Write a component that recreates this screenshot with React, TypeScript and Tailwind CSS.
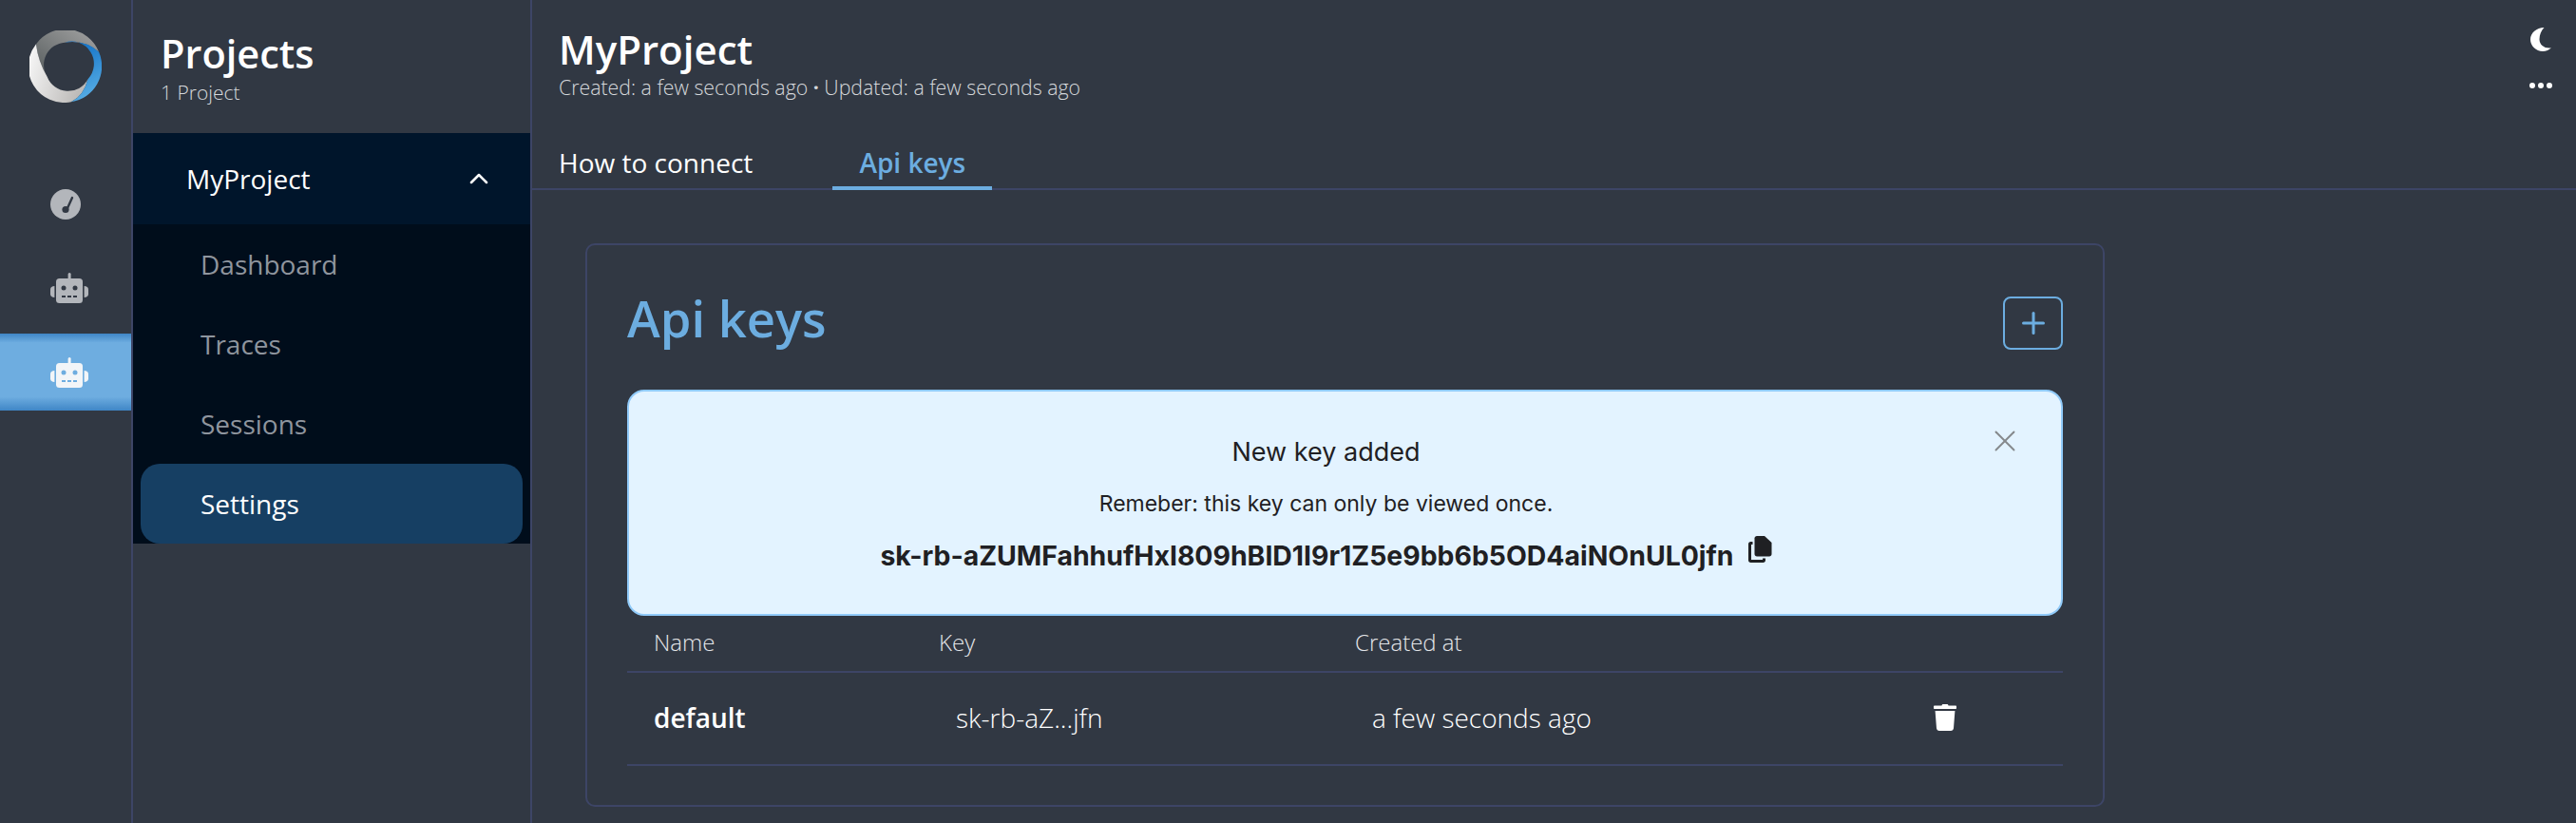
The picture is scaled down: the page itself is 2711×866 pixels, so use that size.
import { ChevronUp, Plus, X } from "lucide-react";

const open = "font-['Open_Sans',sans-serif]";
const inter = "font-['Inter',sans-serif]";

function Logo() {
  return (
    <svg viewBox="95 67 225 226" className="h-[76px] w-[76px]">
      <defs>
        <linearGradient id="gTop" x1="0" y1="1" x2="1" y2="0">
          <stop offset="0" stopColor="#555b5c" />
          <stop offset="1" stopColor="#a5a5a5" />
        </linearGradient>
        <linearGradient id="gLow" x1="0" y1="0" x2="1" y2="0.3">
          <stop offset="0" stopColor="#fafafa" />
          <stop offset="1" stopColor="#bdbbb9" />
        </linearGradient>
        <linearGradient id="gBlue" x1="0.3" y1="0" x2="0.6" y2="1">
          <stop offset="0" stopColor="#0f6fc6" />
          <stop offset="1" stopColor="#5ab0e6" />
        </linearGradient>
      </defs>
      <path d="M115 110 A113 113 0 0 1 312 135 Q265 95 205 105 A70 70 0 0 0 150 212 Q122 165 115 110 Z" fill="url(#gTop)" />
      <path d="M115 110 A113 113 0 0 0 225 291 Q265 270 277 220 A70 70 0 0 1 150 212 Q122 165 115 110 Z" fill="url(#gLow)" />
      <path d="M205 105 Q270 95 312 135 A113 113 0 0 1 225 291 Q265 270 277 220 A70 70 0 0 0 205 105 Z" fill="url(#gBlue)" />
    </svg>
  );
}

function Gauge() {
  return (
    <svg viewBox="0 0 32 32" className="h-8 w-8">
      <circle cx="16" cy="16" r="16" fill="#b3b6bb" />
      <path d="M23 9 L18 20" stroke="#313843" strokeWidth="2.4" strokeLinecap="round" />
      <circle cx="16" cy="21.5" r="3.6" fill="#313843" />
    </svg>
  );
}

function Robot({ fill, hole }: { fill: string; hole: string }) {
  return (
    <svg viewBox="0 0 40 32" className="ml-2 h-8 w-10">
      <rect x="18.6" y="0" width="3" height="7" rx="1.5" fill={fill} />
      <rect x="6" y="6" width="28" height="26" rx="3.5" fill={fill} />
      <path d="M4.4 14 V26 C1.8 26 0 24.5 0 22.5 V17.5 C0 15.5 1.8 14 4.4 14 Z" fill={fill} />
      <path d="M35.6 14 V26 C38.2 26 40 24.5 40 22.5 V17.5 C40 15.5 38.2 14 35.6 14 Z" fill={fill} />
      <circle cx="14" cy="16" r="2.5" fill={hole} />
      <circle cx="26" cy="16" r="2.5" fill={hole} />
      <rect x="12" y="24" width="4" height="2" fill={hole} />
      <rect x="18" y="24" width="4" height="2" fill={hole} />
      <rect x="24" y="24" width="4" height="2" fill={hole} />
    </svg>
  );
}

function CopyIcon() {
  return (
    <svg viewBox="0 0 25 28" className="mb-[14px] ml-[15px] h-[28px] w-[25px]" fill="#1f2023">
      <path d="M9 0 H17 L24.5 7 V19 C24.5 20.5 23.4 21.5 22 21.5 H9 C7.6 21.5 6.5 20.5 6.5 19 V2.5 C6.5 1 7.6 0 9 0 Z" />
      <path d="M0 8.5 C0 7 1 6 2.5 6 H4.5 V9 H3 V25 H15 V23.5 H18 V25.5 C18 27 17 28 15.5 28 H2.5 C1 28 0 27 0 25.5 Z" />
    </svg>
  );
}

function Trash() {
  return (
    <svg viewBox="0 0 24 28" className="h-[28px] w-[24px]" fill="#ffffff">
      <path d="M8.5 1.5 C8.5 .6 9.2 0 10 0 H14 C14.8 0 15.5 .6 15.5 1.5 H23 C23.6 1.5 24 2 24 2.6 V4 C24 4.6 23.6 5 23 5 H1 C.4 5 0 4.6 0 4 V2.6 C0 2 .4 1.5 1 1.5 Z" />
      <path d="M1.6 7 H22.4 L21 25.2 C20.9 26.8 19.6 28 18 28 H6 C4.4 28 3.1 26.8 3 25.2 Z" />
    </svg>
  );
}

function Moon() {
  return (
    <svg viewBox="0 0 22 25" className="h-[25px] w-[22px]" fill="#ffffff">
      <path d="M14.5 0 C6.5 0 0 5.6 0 12.5 C0 19.4 6 25 13 25 C16.6 25 19.8 23.6 22 21.3 C15.5 22.4 9.5 18.6 9.5 12.2 C9.5 7.5 11.5 3 14.5 0 Z" />
    </svg>
  );
}

function Rail() {
  return (
    <aside className="flex w-[140px] shrink-0 flex-col items-center border-r-2 border-[#3d4566] pt-[32px]">
      <Logo />
      <div className="mt-[67px] flex h-[80px] w-full items-center justify-center">
        <Gauge />
      </div>
      <div className="mt-[8px] flex h-[80px] w-full items-center justify-center">
        <Robot fill="#b3b6bb" hole="#313843" />
      </div>
      <div className="mt-[8px] flex h-[81px] w-full items-center justify-center bg-[linear-gradient(180deg,#3f86c6_0%,#6eade0_12%,#6eade0_82%,#3f86c6_100%)]">
        <Robot fill="#f2f5f8" hole="#6eade0" />
      </div>
    </aside>
  );
}

function ProjectNav() {
  const items = ["Dashboard", "Traces", "Sessions"];
  return (
    <aside className={`w-[420px] shrink-0 border-r-2 border-[#3d4566] ${open}`}>
      <div className="h-[140px] pl-[29px] pt-[26px]">
        <h1 className="text-[41.5px] leading-[60px] font-semibold text-white">Projects</h1>
        <p className="-mt-[2px] text-[21px] leading-[26px] font-light text-[#d6d8dc]">1 Project</p>
      </div>
      <div className="flex h-[96px] items-center justify-between bg-[#00152b] pl-[56px] pr-[38px]">
        <span className="text-[28px] text-white">MyProject</span>
        <ChevronUp className="h-8 w-8 text-white" strokeWidth={1.9} />
      </div>
      <div className="bg-[#000d1b]">
        {items.map((t) => (
          <div key={t} className="flex h-[84px] items-center pl-[71px] text-[28px] text-[#8f959e]">
            {t}
          </div>
        ))}
        <div className="ml-[8px] flex h-[84px] w-[402px] items-center rounded-[20px] bg-[#163f63] pl-[63px] text-[28px] text-white">
          Settings
        </div>
      </div>
    </aside>
  );
}

function NewKeyAlert() {
  return (
    <div className={`relative mt-[42px] flex h-[238px] flex-col items-center rounded-[18px] border-2 border-[#90caf9] bg-[#e3f3ff] pr-[40px] pt-[46px] text-[#1f2023] ${inter}`}>
      <p className="text-[27px] leading-[36px]">New key added</p>
      <p className="mt-[20px] text-[23px] leading-[32px]">Remeber: this key can only be viewed once.</p>
      <div className="mt-[18px] flex items-center">
        <span className="text-[28.4px] leading-[40px] font-bold">sk-rb-aZUMFahhufHxI809hBID1I9r1Z5e9bb6b5OD4aiNOnUL0jfn</span>
        <CopyIcon />
      </div>
      <X className="absolute right-[40px] top-[33px] h-[38px] w-[38px] text-[#85898c]" strokeWidth={1.2} />
    </div>
  );
}

function KeysTable() {
  return (
    <div className={open}>
      <div className="grid h-[60px] grid-cols-[300px_438px_1fr] items-center border-b-2 border-[#3d4566] pb-[2px] pl-[28px] text-[24px] font-light text-[#e3e5e8]">
        <span>Name</span>
        <span>Key</span>
        <span>Created at</span>
      </div>
      <div className="grid h-[98px] grid-cols-[300px_438px_1fr_auto] items-center border-b-2 border-[#3d4566] pb-[2px] pl-[28px] pr-[112px] text-[28px] text-white">
        <span className="font-semibold">default</span>
        <span className="pl-[18px] font-light">sk-rb-aZ...jfn</span>
        <span className="pl-[18px] font-light">a few seconds ago</span>
        <Trash />
      </div>
    </div>
  );
}

export default function App() {
  return (
    <div className="flex h-[866px] w-[2711px] overflow-hidden bg-[#313843]">
      <Rail />
      <ProjectNav />
      <main className={`relative min-w-0 flex-1 ${open}`}>
        <header className="h-[200px] border-b-2 border-[#3d4566]">
          <div className="pl-[28px] pt-[24px]">
            <h2 className="text-[42px] leading-[56px] font-semibold text-white">MyProject</h2>
            <p className="-mt-[3px] text-[21.3px] leading-[30px] font-light text-[#d6d8dc]">
              Created: a few seconds ago <span className="font-bold">·</span> Updated: a few seconds ago
            </p>
          </div>
          <nav className="mt-[25px] flex h-[68px] pl-[28px]">
            <span className="pt-[19px] text-[28px] leading-[40px] text-white">How to connect</span>
            <span className="ml-[84px] box-border h-[68px] w-[168px] border-b-4 border-[#6cade0] pt-[19px] text-center text-[28px] leading-[40px] font-semibold text-[#6cade0]">
              Api keys
            </span>
          </nav>
        </header>
        <section className="ml-[56px] mt-[56px] h-[593px] w-[1599px] rounded-[10px] border-2 border-[#3d4566] px-[42px] pt-[54px]">
          <div className="flex items-center justify-between">
            <h3 className="-mt-[10px] text-[52.5px] leading-[56px] font-semibold text-[#6cade0]">Api keys</h3>
            <button className="flex h-[56px] w-[63px] items-center justify-center rounded-[8px] border-2 border-[#6cade0] text-[#6cade0]">
              <Plus className="h-[36px] w-[36px]" strokeWidth={2} />
            </button>
          </div>
          <NewKeyAlert />
          <KeysTable />
        </section>
        <div className="absolute right-[25px] top-[29px] flex flex-col items-center gap-[33px]">
          <Moon />
          <div className="flex gap-[3px]">
            <span className="h-[6px] w-[6px] rounded-full bg-white" />
            <span className="h-[6px] w-[6px] rounded-full bg-white" />
            <span className="h-[6px] w-[6px] rounded-full bg-white" />
          </div>
        </div>
      </main>
    </div>
  );
}
